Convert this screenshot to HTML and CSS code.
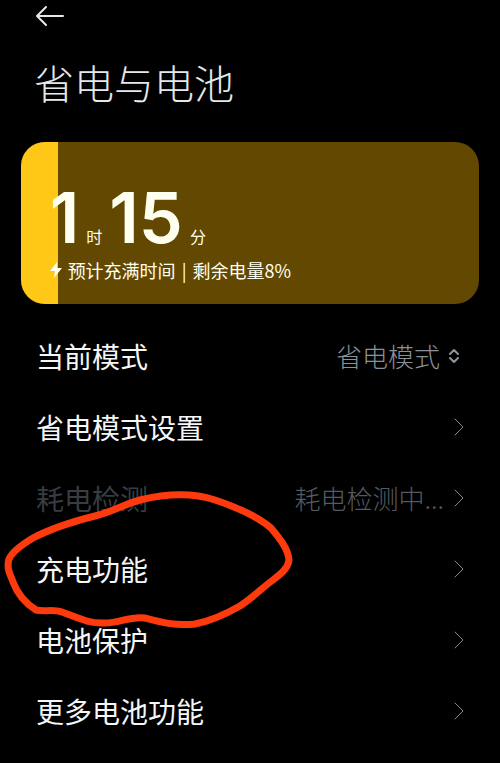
FILE: index.html
```
<!DOCTYPE html>
<html lang="zh-CN">
<head>
    <meta charset="utf-8">
    <meta name="viewport" content="width=device-width, initial-scale=1">
    <title>省电与电池</title>
    <link rel="stylesheet" href="styles.css">
</head>
<body>
    <header class="header">
        <a class="back" href="#" aria-label="返回">
            <svg width="28" height="20" viewBox="0 0 28 20">
                <path d="M27 10H1M10 1L1 10L10 19"/>
            </svg>
        </a>
        <h1 class="title">省电与电池</h1>
    </header>
    <main>
        <section class="battery">
            <div class="level" style="width: 8%"></div>
            <div class="battery-info">
                <p class="time">
                    <span class="number">1</span>
                    <span class="unit">时</span>
                    <span class="number">15</span>
                    <span class="unit">分</span>
                </p>
                <p class="status">
                    <svg class="bolt" width="12" height="16" viewBox="0 0 12 16">
                        <path d="M7 0L0 9H5L4 16L12 6H7Z"/>
                    </svg>
                    <span>预计充满时间</span>
                    <span>|</span>
                    <span>剩余电量8%</span>
                </p>
            </div>
        </section>
        <ul class="settings">
            <li class="row">
                <label class="name" for="mode">当前模式</label>
                <span class="picker">
                    <select class="value" id="mode">
                        <option>省电模式</option>
                    </select>
                    <svg class="updown" width="10" height="14" viewBox="0 0 10 14">
                        <path d="M1 5L5 1L9 5M1 9L5 13L9 9"/>
                    </svg>
                </span>
            </li>
            <li>
                <a class="row" href="#">
                    <span class="name">省电模式设置</span>
                    <svg class="chevron" width="10" height="18" viewBox="0 0 10 18">
                        <path d="M1 1L9 9L1 17"/>
                    </svg>
                </a>
            </li>
            <li>
                <a class="row disabled" href="#">
                    <span class="name">耗电检测</span>
                    <span class="value">耗电检测中...</span>
                    <svg class="chevron" width="10" height="18" viewBox="0 0 10 18">
                        <path d="M1 1L9 9L1 17"/>
                    </svg>
                </a>
            </li>
            <li class="marked">
                <a class="row" href="#">
                    <span class="name">充电功能</span>
                    <svg class="chevron" width="10" height="18" viewBox="0 0 10 18">
                        <path d="M1 1L9 9L1 17"/>
                    </svg>
                </a>
                <svg class="circle" width="300" height="160" viewBox="0 0 300 160">
                    <path d="M95 36C75 41 54 47 33 58C23 64 12 72 9 79C6 89 11 96 13 102C17 113 25 123 36 130C44 132 53 129 62 132C78 138 90 144 105 143C119 143 130 136 145 138C160 142 174 146 195 144C211 141 226 134 240 126C255 116 263 107 273 100C282 93 288 88 289 80C288 69 281 60 271 48C257 36 239 28 215 20C190 12 165 14 140 20C125 24 112 32 95 36Z"/>
                </svg>
            </li>
            <li>
                <a class="row" href="#">
                    <span class="name">电池保护</span>
                    <svg class="chevron" width="10" height="18" viewBox="0 0 10 18">
                        <path d="M1 1L9 9L1 17"/>
                    </svg>
                </a>
            </li>
            <li>
                <a class="row" href="#">
                    <span class="name">更多电池功能</span>
                    <svg class="chevron" width="10" height="18" viewBox="0 0 10 18">
                        <path d="M1 1L9 9L1 17"/>
                    </svg>
                </a>
            </li>
        </ul>
    </main>
</body>
</html>
```
FILE: styles.css
```
*{
    box-sizing: border-box;
}

body{
    margin: 0;
    background-color: #000000;
    color: #f4f6f8;
    font-family: "Noto Sans CJK SC", sans-serif;
}

svg{
    display: block;
    flex-shrink: 0;
    fill: none;
    stroke-linecap: round;
    stroke-linejoin: round;
}

h1, p, ul{
    margin: 0;
    padding: 0;
}

ul{
    list-style: none;
}

a{
    color: inherit;
    text-decoration: none;
}

.header{
    padding: 6px 34px 0;
}

.back{
    display: block;
    width: 28px;
    margin-left: 2px;
    stroke: #e4e8ec;
    stroke-width: 2;
}

.title{
    margin-top: 26px;
    font-size: 40px;
    font-weight: 300;
    line-height: 60px;
    color: #e4e8ec;
}

.battery{
    display: flex;
    height: 162px;
    margin: 30px 21px 0;
    border-radius: 24px;
    overflow: hidden;
    background-color: #624800;
    color: #fffff0;
}

.level{
    background-color: #ffc817;
}

.battery-info{
    margin-left: -8px;
    padding-top: 48px;
}

.time{
    display: flex;
    align-items: baseline;
    gap: 7px;
    line-height: 56px;
}

.number{
    font-family: Inter, sans-serif;
    font-size: 70px;
    font-weight: 600;
}

.unit{
    font-size: 16px;
    line-height: 20px;
}

.status{
    display: flex;
    align-items: center;
    gap: 6px;
    margin-top: 12px;
    font-size: 18px;
    line-height: 24px;
}

.bolt{
    fill: #fffff0;
}

.settings{
    padding-top: 16px;
}

.row{
    display: flex;
    align-items: center;
    height: 71px;
    padding: 0 36px;
}

.name{
    flex: 1;
    font-size: 28px;
}

.value{
    font-family: inherit;
    font-size: 26px;
    font-weight: 300;
    color: #88929a;
}

.picker{
    display: flex;
    align-items: center;
    gap: 8px;
    padding-right: 5px;
}

select.value{
    appearance: none;
    padding: 0;
    border: none;
    background: none;
}

.updown{
    stroke: #8b949b;
    stroke-width: 2;
}

.chevron{
    margin-left: 10px;
    stroke: #85898c;
    stroke-width: 1;
}

.disabled .name{
    color: #363c40;
}

.disabled .value{
    color: #545b60;
}

.marked{
    position: relative;
}

.circle{
    position: absolute;
    top: -53px;
    left: 0;
    stroke: #fd3a0d;
    stroke-width: 7;
    pointer-events: none;
}
```
